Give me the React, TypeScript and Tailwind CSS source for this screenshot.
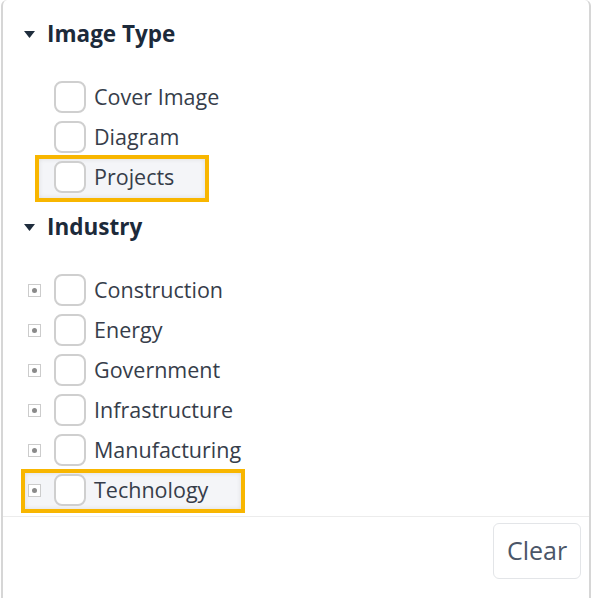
import React from 'react';

const imageTypes = [
  { label: 'Cover Image', highlight: false },
  { label: 'Diagram', highlight: false },
  { label: 'Projects', highlight: true },
];

const industries = [
  { label: 'Construction', highlight: false },
  { label: 'Energy', highlight: false },
  { label: 'Government', highlight: false },
  { label: 'Infrastructure', highlight: false },
  { label: 'Manufacturing', highlight: false },
  { label: 'Technology', highlight: true },
];

function Caret() {
  return (
    <svg width="11" height="7" viewBox="0 0 11 7" className="shrink-0">
      <path d="M0 0 L11 0 L5.5 7 Z" fill="#1f2d3d" />
    </svg>
  );
}

function Heading({ title }: { title: string }) {
  return (
    <div className="flex items-center h-[30px] pl-[21px] gap-[12px]">
      <Caret />
      <span className="text-[22.5px] font-bold text-[#1c2a3a]">{title}</span>
    </div>
  );
}

function Box() {
  return <span className="block w-[32px] h-[32px] rounded-[8px] border-2 border-[#cfcfcf] bg-white shrink-0" />;
}

function Expander() {
  return (
    <span className="flex items-center justify-center w-[13px] h-[13px] border border-[#cccccc] bg-white shrink-0">
      <span className="block w-[5px] h-[5px] rounded-full bg-[#8a8a8a]" />
    </span>
  );
}

function Row({ label, highlight, tree }: { label: string; highlight: boolean; tree?: boolean }) {
  return (
    <div className="relative flex items-center h-[40px]">
      {highlight && (
        <span
          className={
            tree
              ? 'absolute left-[18px] w-[224px] top-[-1px] bottom-[-3px] border-[4px] border-[#f8b600] bg-[#f4f5f8] shadow-[inset_0_0_5px_rgba(0,0,0,0.1)]'
              : 'absolute left-[32px] w-[174px] top-[-2px] bottom-[-5px] border-[4px] border-[#f8b600] bg-[#f4f5f8] shadow-[inset_0_0_5px_rgba(0,0,0,0.1)]'
          }
        />
      )}
      <div className="relative flex items-center w-full">
        <span className="w-[51px] pl-[25px] shrink-0 flex">{tree && <Expander />}</span>
        <Box />
        <span className="ml-[8px] text-[21.5px] text-[#363d4a] leading-none">{label}</span>
      </div>
    </div>
  );
}

export default function App() {
  return (
    <div
      className="w-[592px] h-[598px] bg-white flex flex-col"
      style={{ fontFamily: '"Open Sans", "Noto Sans", sans-serif' }}
    >
      <div className="flex-1 flex flex-col mx-[1px] border-l-2 border-r-2 border-[#d6d6d6] rounded-t-[6px]">
        <div className="pt-[19px]">
          <Heading title="Image Type" />
          <div className="mt-[28px]">
            {imageTypes.map((t) => (
              <Row key={t.label} label={t.label} highlight={t.highlight} />
            ))}
          </div>
        </div>
        <div className="mt-[15px]">
          <Heading title="Industry" />
          <div className="mt-[28px]">
            {industries.map((t) => (
              <Row key={t.label} label={t.label} highlight={t.highlight} tree />
            ))}
          </div>
        </div>
        <div className="mt-[6px] border-t border-[#ececec] flex justify-end pr-[8px] pt-[6px]">
          <button className="w-[88px] h-[56px] rounded-[6px] border border-[#e3e5e8] bg-white text-[25px] text-[#4b5668]">
            Clear
          </button>
        </div>
      </div>
    </div>
  );
}
